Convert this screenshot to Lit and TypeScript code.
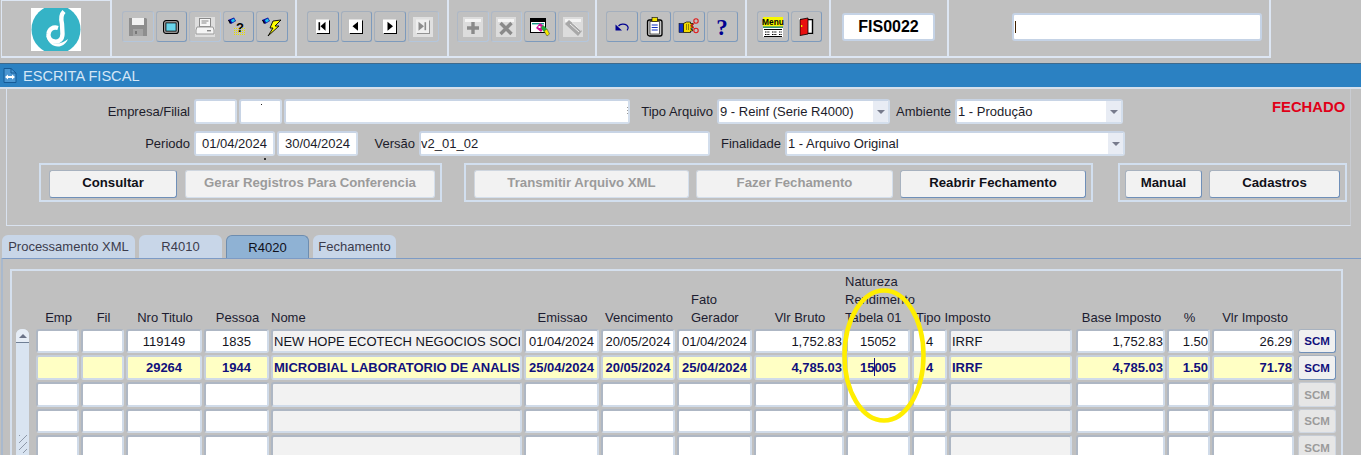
import { LitElement, html, css, svg } from "lit";
import { customElement } from "lit/decorators.js";

const nav = (kind: string, off = false) => {
  const c = off ? "#8c8c8c" : "#000";
  const arrow: Record<string, any> = {
    first: svg`<rect x="6" y="6" width="1.6" height="8" fill="${c}"/><polygon points="13,5.5 8,10 13,14.5" fill="${c}"/>`,
    prev: svg`<polygon points="12.5,5.5 7,10 12.5,14.5" fill="${c}"/>`,
    next: svg`<polygon points="8,5.5 13.5,10 8,14.5" fill="${c}"/>`,
    last: svg`<polygon points="6,5.5 11.5,10 6,14.5" fill="${c}"/><rect x="12" y="6" width="1.6" height="8" fill="${c}"/>`,
  };
  return svg`${off ? svg`<rect x="0" y="0" width="20" height="20" fill="#e0e0e0"/>` : ""}
    <rect x="4" y="3.5" width="13" height="13.5" fill="#000" opacity="${off ? 0.35 : 1}"/>
    <rect x="3" y="2.5" width="13" height="13.5" fill="${off ? "#efefef" : "#fff"}"/>
    <g transform="translate(-0.5 -0.8)">${arrow[kind]}</g>`;
};
const torch = svg`<polygon points="0,3 6,0.5 8,4 3,7" fill="#0a0aa0"/><polygon points="3,3 6,1.5 7,4 4,5.5" fill="#18c8f0"/><polygon points="0,3 2,7 3,6 1,3" fill="#000"/>`;
const boxed = (inner: any) => svg`<rect x="0" y="0" width="20" height="20" fill="#dcdcdc"/><rect x="2" y="2" width="16" height="3" fill="#f4f4f4"/>${inner}`;
const dots = (x: number, y: number, w: number, h: number, fill: string, step = 2) => {
  const out: any[] = [];
  for (let i = x; i < x + w; i += step) for (let j = y; j < y + h; j += step) out.push(svg`<rect x="${i}" y="${j}" width="1" height="1" fill="${fill}"/>`);
  return out;
};

const ICONS: Record<string, any> = {
  save: svg`<path d="M1 1h17l1 1v17H1z" fill="#8e8e8e"/><rect x="4" y="1" width="12" height="7" fill="#f2f2f2"/><rect x="5" y="12" width="10" height="7" fill="#a4a4a4"/><rect x="7" y="14" width="2" height="3" fill="#777"/>`,
  monitor: svg`<rect x="2.6" y="3.6" width="14.8" height="12.8" rx="2.5" fill="#c0c0c0" stroke="#000" stroke-width="1.2"/><rect x="4.4" y="5.4" width="11.2" height="9.2" fill="#000"/><rect x="5.4" y="6.4" width="9.2" height="7.2" fill="#7fdff0"/>${dots(5.5, 6.5, 9, 7, "#2fb8d8")}`,
  print: svg`<rect x="0" y="0" width="20" height="20" fill="#dedede"/><rect x="4.5" y="1.5" width="11" height="8" fill="#f6f6f6" stroke="#8a8a8a"/><path d="M6.5 4h7M6.5 6h5" stroke="#888"/><path d="M2 10h16l1 3v4H1v-4z" fill="#f4f4f4" stroke="#9a9a9a"/><rect x="12" y="13" width="4" height="1.4" fill="#888"/>`,
  query: svg`${torch}${dots(6, 11, 11, 8, "#e8e000")}<text x="12" y="15" text-anchor="middle" class="ico-q">?</text>`,
  bolt: svg`${torch}<polygon points="19,3 11,4 8,11 11,11 6,19 17,9 13,9" fill="#ffff00" stroke="#000" stroke-width="0.9"/>`,
  first: nav("first"), prev: nav("prev"), next: nav("next"), last: nav("last", true),
  plus: boxed(svg`<path d="M10 5v12M4 11h12" stroke="#8a8a8a" stroke-width="3.4"/>`),
  del: boxed(svg`<path d="M4.5 6l11 11M15.5 6l-11 11" stroke="#8a8a8a" stroke-width="3.4"/>`),
  win: svg`<rect x="0.5" y="1.5" width="15" height="14" fill="#fff" stroke="#000"/><rect x="1" y="2" width="14" height="3" fill="#000"/><rect x="2" y="6" width="12" height="1.4" fill="#159a88"/><polygon points="10,6 15,10 11,15 6,11" fill="#d0109a"/><polygon points="13,8 17,12 14,15 11,11" fill="#1fae3b"/><polygon points="14,14 17,12 19.5,17 17,19" fill="#f5e800" stroke="#333" stroke-width="0.5"/><rect x="8.5" y="9" width="2" height="2" fill="#fff"/>`,
  erase: svg`<rect x="0" y="0" width="20" height="20" fill="#dcdcdc"/><rect x="2" y="2" width="16" height="3" fill="#f4f4f4"/><polygon points="2,7 6,3 19,14 15,19" fill="#a8a8a8"/><path d="M7 7l9 8M9 5.5l9 8" stroke="#ececec" stroke-width="1"/>`,
  undo: svg`<path d="M6.5 9C8.5 6.8 12.5 6.6 14.8 8.3C16.4 9.8 16.2 12 15 13.4" fill="none" stroke="#000090" stroke-width="1.2"/><polygon points="3.5,7.5 10,13.5 3.5,13.5" fill="#000090"/>`,
  clip: svg`<rect x="2.5" y="3" width="14.5" height="16" rx="2" fill="#c8c8c8" stroke="#000" stroke-width="1.3"/><rect x="5" y="4.5" width="9.5" height="12.5" fill="#fff" stroke="#000" stroke-width="0.6"/><rect x="7" y="0.5" width="5.5" height="4" fill="#f2e200" stroke="#000" stroke-width="0.6"/><path d="M6.7 8h6M6.7 10.5h6M6.7 13h6" stroke="#1030c0" stroke-width="1.1"/>`,
  hand: svg`<rect x="0" y="6.5" width="4.5" height="9" fill="#1030c8" stroke="#000" stroke-width="0.5"/><path d="M4.5 6.5l3-1.5h4v1.5h2.5v1.5h-2v1.5h2V11h-2v1.5h1.5V14h-2v1.5H4.5z" fill="#f2da00" stroke="#000" stroke-width="0.7"/><path d="M7 8h3M7 10h3M7 12h3" stroke="#000" stroke-width="0.8" stroke-dasharray="1 1"/><circle cx="17" cy="4" r="2.2" fill="none" stroke="#e01818" stroke-width="1.1"/><circle cx="17" cy="13.5" r="2.2" fill="none" stroke="#e01818" stroke-width="1.1"/><path d="M15.5 5.5l-3.5 5M15.5 12l-3.5-5" stroke="#e01818" stroke-width="1"/>`,
  help: svg`<text x="10" y="17.5" text-anchor="middle" class="ico-help">?</text>`,
  menu: svg`<rect x="0" y="0" width="20" height="9.5" fill="#f8f800"/><text x="10" y="8" text-anchor="middle" class="ico-menu">Menu</text><rect x="0" y="9.5" width="20" height="1.4" fill="#1a8a5a"/><rect x="0" y="10.9" width="20" height="9.1" fill="#fff"/><path d="M1 12.5h18M1 19.5h18" stroke="#000"/><path d="M2 15h5M9 15h5M16 15h3M2 17.5h5M9 17.5h5M16 17.5h3" stroke="#000" stroke-dasharray="1.5 .8"/>`,
  door: svg`<rect x="3" y="1" width="14" height="17" fill="#fff"/><path d="M4 2.5h12.5v14H4" fill="none" stroke="#000" stroke-width="1.4"/><polygon points="4,2.5 12,1 12,17 4,18.5" fill="#e81010" stroke="#000" stroke-width="0.8"/><rect x="5" y="8" width="1.3" height="2" fill="#f5e800"/>`,
};

const TOOL_GROUPS: [string, boolean][][] = [
  [["save", true], ["monitor", false], ["print", true], ["query", false], ["bolt", false]],
  [["first", false], ["prev", false], ["next", false], ["last", true]],
  [["plus", true], ["del", true], ["win", false], ["erase", true]],
  [["undo", false], ["clip", false], ["hand", false], ["help", false]],
  [["menu", false], ["door", false]],
];

type Col = { h: string; cls: string; head: string };
const COLS: Col[] = [
  { h: "Emp", cls: "c", head: "hc" },
  { h: "Fil", cls: "c", head: "hc" },
  { h: "Nro Titulo", cls: "c", head: "hc" },
  { h: "Pessoa", cls: "c", head: "hc" },
  { h: "Nome", cls: "l ro", head: "hl" },
  { h: "Emissao", cls: "c", head: "hc" },
  { h: "Vencimento", cls: "c", head: "hc" },
  { h: "Fato\nGerador", cls: "c", head: "hfato" },
  { h: "Vlr Bruto", cls: "r", head: "hc" },
  { h: "Natureza\nRendimento\nTabela 01", cls: "c", head: "hnat" },
  { h: "Tipo Imposto", cls: "c", head: "htipo" },
  { h: "", cls: "l ro wide", head: "hl" },
  { h: "Base Imposto", cls: "r", head: "hc" },
  { h: "%", cls: "r", head: "hc" },
  { h: "Vlr Imposto", cls: "r wide", head: "hc" },
];
const ROWS: string[][] = [
  ["", "", "119149", "1835", "NEW HOPE ECOTECH NEGOCIOS SOCI", "01/04/2024", "20/05/2024", "01/04/2024", "1,752.83", "15052", "4", "IRRF", "1,752.83", "1.50", "26.29"],
  ["", "", "29264", "1944", "MICROBIAL LABORATORIO DE ANALIS", "25/04/2024", "20/05/2024", "25/04/2024", "4,785.03", "15005", "4", "IRRF", "4,785.03", "1.50", "71.78"],
  Array(15).fill(""),
  Array(15).fill(""),
  Array(15).fill(""),
];

@customElement("app-root")
export class AppRoot extends LitElement {
  static styles = css`
    :host { display: block; position: relative; width: 1361px; height: 455px; overflow: hidden; background: #c0c0c0;
      font-family: "Liberation Sans", Arial, sans-serif; font-size: 13px; color: #1c1c2a; }
    * { box-sizing: border-box; }

    .toolbar { display: flex; height: 58px; margin-left: 1px; width: 1270px; }
    .cell { display: flex; align-items: flex-start; gap: 2px; padding-top: 11px; border-right: 2px solid #dde6f3; border-bottom: 2px solid #dde6f3; }
    .cell-logo { width: 111px; padding: 7px 0 0 29px; border-top: 1px solid #dde6f3; border-left: 1px solid #dde6f3; }
    .cell-file { width: 185px; padding-left: 10px; }
    .cell-nav { width: 152px; padding-left: 10px; }
    .cell-edit { width: 148px; padding-left: 8px; }
    .cell-misc { width: 150px; padding-left: 9px; }
    .cell-exit { width: 84px; padding-left: 10px; }
    .cell-form { width: 118px; padding: 13px 0 0 11px; }
    .cell-search { width: 322px; padding: 13px 0 0 63px; }
    .logo { display: block; }
    .tool { width: 31.5px; height: 31px; flex: none; display: flex; align-items: center; justify-content: center; border: 1.5px solid; border-color: #a4afbd #7d9abc #7d9abc #a4afbd; border-radius: 3px; background: #c0c0c0; }
    .tool.off { border-color: #aeb8c6 #b4c6dc #b4c6dc #aeb8c6; }
    .tool svg { width: 20px; height: 20px; display: block; overflow: visible; }
    .ico-q { font: bold 13px "Liberation Sans", sans-serif; fill: #000; }
    .ico-help { font: bold 23px "Liberation Serif", serif; fill: #000090; }
    .ico-menu { font: bold 8.4px "Liberation Sans", sans-serif; fill: #000; }

    .formfield { height: 28px; background: #fff; border: 2px solid #c5d3e6; border-radius: 3px; display: flex; align-items: center; position: relative; }
    .fis { width: 93px; justify-content: center; font-weight: bold; font-size: 16px; color: #000; }
    .search { width: 250px; padding-left: 1px; }
    .caret { width: 1px; height: 12px; background: #402000; }

    .title { margin-top: 5px; height: 26px; background: #2b81c2; border-top: 1px solid #3f6a8c; border-bottom: 2px solid #d6e0ec; display: flex; align-items: center; gap: 6px; padding-left: 3px; color: #d4e6f6; font-size: 14.6px; }
    .title svg { width: 14px; height: 15px; flex: none; }

    .top { position: relative; margin-left: 6px; width: 1345px; height: 137px; border-left: 1px solid #d9e2ef; border-bottom: 1px solid #d9e2ef; border-right: 1px solid #c9ccd2; padding-top: 10px; }
    .top::after { content: ""; position: absolute; left: 257px; top: 69px; width: 2px; height: 2px; background: #333; }
    .row { display: flex; align-items: center; height: 25px; }
    .row + .row { margin-top: 7px; }
    .lab { text-align: right; margin-right: 4px; flex: none; white-space: nowrap; }
    .lab-a { width: 183px; } .lab-t { width: 83px; } .lab-m { width: 61px; } .lab-v { width: 57px; } .lab-f { width: 71px; }
    .f { height: 100%; flex: none; background: #fff; border: 2px solid; border-color: #c8d4e5 #d3deec #d3deec #c8d4e5; border-radius: 3px; padding-left: 1px; display: flex; align-items: center; position: relative; white-space: nowrap; overflow: hidden; }
    .f.c { justify-content: center; padding: 0; }
    .gap { margin-right: 2px; }
    .w43 { width: 43px; } .w346 { width: 346px; } .w173 { width: 173px; } .w168 { width: 168px; } .w81 { width: 81px; } .w291 { width: 291px; padding-left: 0; } .w340 { width: 340px; }
    .dot::after { content: ""; position: absolute; left: 20px; top: 3px; width: 1px; height: 1px; background: #222; }
    .ticks::after { content: ""; position: absolute; right: 0; top: 6px; width: 1px; height: 8px; background: repeating-linear-gradient(#999 0 1px, transparent 1px 3px); }
    .sel { padding-right: 18px; }
    .arrow { position: absolute; right: 0; top: 0; bottom: 0; width: 15px; background: #e8ecf4; display: flex; align-items: center; justify-content: center; }
    .arrow::after { content: ""; border: 4px solid transparent; border-top: 4px solid #777b8c; border-bottom: 0; }
    .fechado { margin-left: 149px; align-self: flex-start; margin-top: 1px; color: #e00018; font-weight: bold; font-size: 14.8px; line-height: 14px; white-space: nowrap; }

    .actions { display: flex; margin: 7px 0 0 32px; }
    .group { height: 39px; flex: none; display: flex; gap: 7px; align-items: flex-start; padding: 5px 0 0 8px; border: 2px solid #d2dfef; }
    .g1 { width: 403px; } .g2 { width: 629px; margin-left: 22px; } .g3 { width: 229px; margin-left: 25px; padding-left: 5px; }
    .g1 .b1 { margin-right: 1px; }
    .btn { height: 28px; flex: none; background: #f2f2f2; border: 1.5px solid; border-color: #a8b2bf #6f8fb8 #6f8fb8 #a8b2bf; border-radius: 3px; font-weight: bold; font-size: 13.2px; color: #101018; display: flex; align-items: center; justify-content: center; white-space: nowrap; padding-bottom: 3px; }
    .btn.off { color: #9b9b9b; border-color: #cfd6df #d4dfec #d4dfec #cfd6df; }
    .b128 { width: 128px; } .b250 { width: 250px; } .b215 { width: 215px; } .b197 { width: 197px; } .b186 { width: 186px; } .b77 { width: 77px; } .b131 { width: 131px; }

    .tabs { display: flex; gap: 4px; margin: 9px 0 0 2px; height: 23px; }
    .tab { background: #c8d6e8; border-radius: 6px 6px 0 0; display: flex; align-items: center; justify-content: center; color: #3c3c4c; white-space: nowrap; }
    .tab.on { background: #8fb2d4; border: 1px solid #6d8db0; border-bottom: 0; color: #10101a; }
    .t133 { width: 133px; } .t83 { width: 83px; }

    .body { border-top: 1px solid #7d9bc5; border-left: 2px solid #a9b9cd; margin-left: 1px; padding: 10px 0 0 7px; }
    .inner { width: 1333px; height: 200px; border: 2px solid #d5e0ee; border-bottom: 0; padding: 1px 0 0 4px; }
    .grid { display: grid; grid-template-columns: 20px 45px 45px 78px 67px 253px 77px 76px 77px 92px 66px 37px 127px 91px 45px 86px 38px; grid-template-rows: 55px 24px 25px 25px 24px 25px; row-gap: 2px; }
    .h { white-space: pre; align-self: end; line-height: 18px; color: #1c1c30; }
    .hc { text-align: center; }
    .hl { padding-left: 0; }
    .hfato { padding-left: 14px; }
    .hnat { margin-left: -1px; }
    .htipo { padding-left: 4px; }
    .sb { grid-column: 1; grid-row: 2 / 7; width: 13px; background: #d9e4f1; border-radius: 6px 6px 0 0; position: relative; height: 130px; }
    .sb-up { height: 14px; background: #e6edf6; border-radius: 6px 6px 0 0; border-bottom: 1px solid #6f7f95; display: flex; align-items: center; justify-content: center; }
    .sb-up::after { content: ""; border: 4px solid transparent; border-bottom: 4px solid #6b7388; border-top: 0; }
    .grip { position: absolute; left: 3px; top: 106px; width: 8px; height: 18px; background: repeating-linear-gradient(135deg, #8e98a8 0 1px, transparent 1px 5px); }
    .td { margin-right: 2px; background: #fff; border: 2px solid; border-color: #aeb7c4 #d0dbe9 #d0dbe9 #aeb7c4; border-radius: 3px; display: flex; align-items: center; white-space: nowrap; overflow: hidden; position: relative; color: #14141e; }
    .td.wide { margin-right: 4px; }
    .td.c { justify-content: center; }
    .td.r { justify-content: flex-end; padding-right: 0; }
    .td.l { padding-left: 1px; }
    .td.ro { background: #f2f2f2; }
    .td.hi { background: #ffffc4; color: #10107c; font-weight: bold; border-color: #c5cfdc #d0dbe9 #d0dbe9 #c5cfdc; }
    .td .cursor { position: absolute; left: 26px; top: 1px; bottom: 2px; width: 1px; background: #10107c; }
    .scm { background: #f0f0f0; border: 1.5px solid; border-color: #a8b2bf #6f8fb8 #6f8fb8 #a8b2bf; border-radius: 3px; font: bold 11.5px "Liberation Sans", sans-serif; color: #10107c; display: flex; align-items: center; justify-content: center; }
    .scm.off { background: #e6e6e6; color: #9b9b9b; border-color: #c6ccd5 #d0d8e3 #d0d8e3 #c6ccd5; }

    .ring { position: absolute; left: 841px; top: 287px; width: 86px; height: 137px; pointer-events: none; }
  `;

  private tool(name: string, off: boolean) {
    return html`<div class="tool ${off ? "off" : ""}"><svg viewBox="0 0 20 20">${ICONS[name]}</svg></div>`;
  }

  render() {
    const cellCls = ["cell-file", "cell-nav", "cell-edit", "cell-misc", "cell-exit"];
    return html`
      <div class="toolbar">
        <div class="cell cell-logo">
          <svg class="logo" width="50" height="43" viewBox="0 0 50 43">
            <rect width="50" height="43" fill="#fff"/>
            <circle cx="25" cy="21.5" r="24.5" fill="#35b3c6"/>
            <path d="M33 3.5C29.5 7 30 12 31 16L31.5 26C31.5 32 27 34 23.5 33.5C19 33 17 29 17.5 26C18 21 22 18.5 27 20" fill="none" stroke="#fff" stroke-width="4.4"/>
            <path d="M15.6 28C17 36 24 40 30 38C33 37 36 34 37 31C33 34.5 27 36.5 22 35C20 34 18.5 31 18 28z" fill="#fff"/>
          </svg>
        </div>
        ${TOOL_GROUPS.map((g, i) => html`<div class="cell ${cellCls[i]}">${g.map(([n, off]) => this.tool(n, off))}</div>`)}
        <div class="cell cell-form"><div class="formfield fis">FIS0022</div></div>
        <div class="cell cell-search"><div class="formfield search"><span class="caret"></span></div></div>
      </div>

      <div class="title">
        <svg viewBox="0 0 14 15"><path d="M1 .5h7l5 4.5v9.5H1z" fill="#4a96d2" stroke="#155a96"/><path d="M8 .5v4.5h5" fill="none" stroke="#155a96"/><path d="M2 9l3-2.5v5zM12 9L9 6.5v5z" fill="#fff"/><rect x="5" y="8" width="4" height="2" fill="#fff"/></svg>
        <span>ESCRITA FISCAL</span>
      </div>

      <div class="top">
        <div class="row">
          <span class="lab lab-a">Empresa/Filial</span>
          <div class="f w43 gap"></div>
          <div class="f w43 gap dot"></div>
          <div class="f w346 ticks"></div>
          <span class="lab lab-t">Tipo Arquivo</span>
          <div class="f w173 sel">9 - Reinf (Serie R4000)<span class="arrow"></span></div>
          <span class="lab lab-m">Ambiente</span>
          <div class="f w168 sel">1 - Produção<span class="arrow"></span></div>
          <span class="fechado">FECHADO</span>
        </div>
        <div class="row">
          <span class="lab lab-a">Periodo</span>
          <div class="f w81 gap c">01/04/2024</div>
          <div class="f w81 c">30/04/2024</div>
          <span class="lab lab-v">Versão</span>
          <div class="f w291">v2_01_02</div>
          <span class="lab lab-f">Finalidade</span>
          <div class="f w340 sel">1 - Arquivo Original<span class="arrow"></span></div>
        </div>
        <div class="actions">
          <div class="group g1">
            <div class="btn b128 b1">Consultar</div>
            <div class="btn off b250">Gerar Registros Para Conferencia</div>
          </div>
          <div class="group g2">
            <div class="btn off b215">Transmitir Arquivo XML</div>
            <div class="btn off b197">Fazer Fechamento</div>
            <div class="btn b186">Reabrir Fechamento</div>
          </div>
          <div class="group g3">
            <div class="btn b77">Manual</div>
            <div class="btn b131">Cadastros</div>
          </div>
        </div>
      </div>

      <div class="tabs">
        <div class="tab t133">Processamento XML</div>
        <div class="tab t83">R4010</div>
        <div class="tab t83 on">R4020</div>
        <div class="tab t83">Fechamento</div>
      </div>

      <div class="body">
        <div class="inner">
          <div class="grid">
            <span></span>
            ${COLS.map((c) => html`<div class="h ${c.head}">${c.h}</div>`)}
            <span></span>
            <div class="sb"><div class="sb-up"></div><div class="grip"></div></div>
            ${ROWS.map((r, ri) => html`
              ${r.map((v, ci) => html`<div class="td ${COLS[ci].cls} ${ri === 1 ? "hi" : ""}">${ri === 1 && ci === 9 ? html`<span class="cursor"></span>` : ""}${v}</div>`)}
              <div class="scm ${ri > 1 ? "off" : ""}">SCM</div>
            `)}
          </div>
        </div>
      </div>

      <svg class="ring" viewBox="0 0 86 137"><ellipse cx="43" cy="68.5" rx="39.5" ry="65" fill="none" stroke="#ffee00" stroke-width="4.5"/></svg>
    `;
  }
}
